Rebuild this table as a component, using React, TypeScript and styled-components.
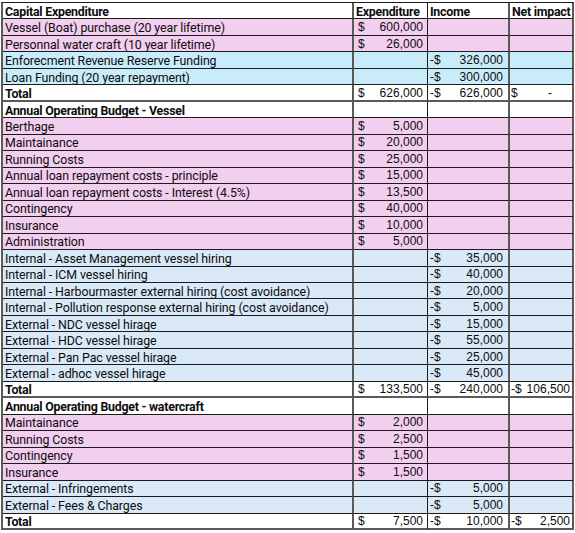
import React from "react"
import styled, { createGlobalStyle } from "styled-components"

const GlobalStyle = createGlobalStyle`
  html, body {
    margin: 0;
    padding: 0;
    background: #ffffff;
  }
`

type Fill = "white" | "pink" | "cyan" | "blue"

interface Money {
  sign: "$" | "-$"
  value: string
}

interface Row {
  label: string
  fill: Fill
  bold?: boolean
  total?: boolean
  exp?: Money
  inc?: Money
  net?: Money
}

const fills: Record<Fill, string> = {
  white: "#ffffff",
  pink: "#f2ceef",
  cyan: "#c9ecfa",
  blue: "#dae9f8",
}

const Sheet = styled.div`
  display: grid;
  grid-template-columns: 351px 74px 82px 64px;
  grid-auto-rows: 16.47px;
  margin: 2px 0 0 1px;
  width: max-content;
  border-left: 2px solid #5a5a5a;
  border-top: 1px solid #1c1c1c;
  font-family: "Roboto", "Liberation Sans", sans-serif;
  color: #0d0d0d;
`

const Cell = styled.div<{ $fill: Fill; $bold?: boolean; $total?: boolean; $edge?: "grey" | "black" }>`
  box-sizing: border-box;
  background: ${({ $fill }) => fills[$fill]};
  border-bottom: ${({ $total }) => ($total ? "2px solid #5a5a5a" : "1px solid #1c1c1c")};
  border-right: ${({ $edge }) => ($edge === "black" ? "1px solid #1c1c1c" : "2px solid #5a5a5a")};
  font-size: 12.4px;
  font-weight: ${({ $bold }) => ($bold ? 700 : 400)};
  letter-spacing: ${({ $bold }) => ($bold ? "-0.25px" : "-0.1px")};
  line-height: 15px;
  padding: 1px 2px 0;
  white-space: nowrap;
  overflow: hidden;
  display: flex;
  align-items: center;
`

const Amount = styled(Cell)<{ $left: number; $pad: number }>`
  font-family: "Liberation Sans", Arial, sans-serif;
  font-size: 12px;
  letter-spacing: 0;
  justify-content: space-between;
  padding: 1px ${({ $pad }) => $pad}px 0 ${({ $left }) => $left}px;
`

const Dash = styled.span`
  padding-right: 18px;
`

const rows: Row[] = [
  { label: "Vessel (Boat) purchase (20 year lifetime)", fill: "pink", exp: { sign: "$", value: "600,000" } },
  { label: "Personnal water craft (10 year lifetime)", fill: "pink", exp: { sign: "$", value: "26,000" } },
  { label: "Enforecment Revenue Reserve Funding", fill: "cyan", inc: { sign: "-$", value: "326,000" } },
  { label: "Loan Funding (20 year repayment)", fill: "cyan", inc: { sign: "-$", value: "300,000" } },
  {
    label: "Total",
    fill: "white",
    bold: true,
    total: true,
    exp: { sign: "$", value: "626,000" },
    inc: { sign: "-$", value: "626,000" },
    net: { sign: "$", value: "-" },
  },
  { label: "Annual Operating Budget - Vessel", fill: "white", bold: true },
  { label: "Berthage", fill: "pink", exp: { sign: "$", value: "5,000" } },
  { label: "Maintainance", fill: "pink", exp: { sign: "$", value: "20,000" } },
  { label: "Running Costs", fill: "pink", exp: { sign: "$", value: "25,000" } },
  { label: "Annual loan repayment costs - principle", fill: "pink", exp: { sign: "$", value: "15,000" } },
  { label: "Annual loan repayment costs - Interest (4.5%)", fill: "pink", exp: { sign: "$", value: "13,500" } },
  { label: "Contingency", fill: "pink", exp: { sign: "$", value: "40,000" } },
  { label: "Insurance", fill: "pink", exp: { sign: "$", value: "10,000" } },
  { label: "Administration", fill: "pink", exp: { sign: "$", value: "5,000" } },
  { label: "Internal - Asset Management vessel hiring", fill: "blue", inc: { sign: "-$", value: "35,000" } },
  { label: "Internal - ICM vessel hiring", fill: "blue", inc: { sign: "-$", value: "40,000" } },
  { label: "Internal - Harbourmaster external hiring (cost avoidance)", fill: "blue", inc: { sign: "-$", value: "20,000" } },
  { label: "Internal - Pollution response external hiring (cost avoidance)", fill: "blue", inc: { sign: "-$", value: "5,000" } },
  { label: "External - NDC vessel hirage", fill: "blue", inc: { sign: "-$", value: "15,000" } },
  { label: "External - HDC vessel hirage", fill: "blue", inc: { sign: "-$", value: "55,000" } },
  { label: "External - Pan Pac vessel hirage", fill: "blue", inc: { sign: "-$", value: "25,000" } },
  { label: "External - adhoc vessel hirage", fill: "blue", inc: { sign: "-$", value: "45,000" } },
  {
    label: "Total",
    fill: "white",
    bold: true,
    total: true,
    exp: { sign: "$", value: "133,500" },
    inc: { sign: "-$", value: "240,000" },
    net: { sign: "-$", value: "106,500" },
  },
  { label: "Annual Operating Budget - watercraft", fill: "white", bold: true },
  { label: "Maintainance", fill: "pink", exp: { sign: "$", value: "2,000" } },
  { label: "Running Costs", fill: "pink", exp: { sign: "$", value: "2,500" } },
  { label: "Contingency", fill: "pink", exp: { sign: "$", value: "1,500" } },
  { label: "Insurance", fill: "pink", exp: { sign: "$", value: "1,500" } },
  { label: "External - Infringements", fill: "blue", inc: { sign: "-$", value: "5,000" } },
  { label: "External - Fees & Charges", fill: "blue", inc: { sign: "-$", value: "5,000" } },
  {
    label: "Total",
    fill: "white",
    bold: true,
    total: true,
    exp: { sign: "$", value: "7,500" },
    inc: { sign: "-$", value: "10,000" },
    net: { sign: "-$", value: "2,500" },
  },
]

const MoneyCell: React.FC<{
  money?: Money
  fill: Fill
  total?: boolean
  edge: "grey" | "black"
  left: number
  pad: number
}> = ({ money, fill, total, edge, left, pad }) => (
  <Amount $fill={fill} $total={total} $edge={edge} $left={left} $pad={pad}>
    {money && (
      <>
        <span>{money.sign}</span>
        {money.value === "-" ? <Dash>-</Dash> : <span>{money.value}</span>}
      </>
    )}
  </Amount>
)

const App: React.FC = () => {
  return (
    <>
      <GlobalStyle />
      <Sheet>
        <Cell $fill="white" $bold>
          Capital Expenditure
        </Cell>
        <Cell $fill="white" $bold $edge="black">
          Expenditure
        </Cell>
        <Cell $fill="white" $bold>
          Income
        </Cell>
        <Cell $fill="white" $bold>
          Net impact
        </Cell>
        {rows.map((row, i) => (
          <React.Fragment key={i}>
            <Cell $fill={row.fill} $bold={row.bold} $total={row.total}>
              {row.label}
            </Cell>
            <MoneyCell money={row.exp} fill={row.fill} total={row.total} edge="black" left={4} pad={4} />
            <MoneyCell money={row.inc} fill={row.fill} total={row.total} edge="grey" left={2} pad={5} />
            <MoneyCell money={row.net} fill={row.fill} total={row.total} edge="grey" left={1} pad={2} />
          </React.Fragment>
        ))}
      </Sheet>
    </>
  )
}

export default App
